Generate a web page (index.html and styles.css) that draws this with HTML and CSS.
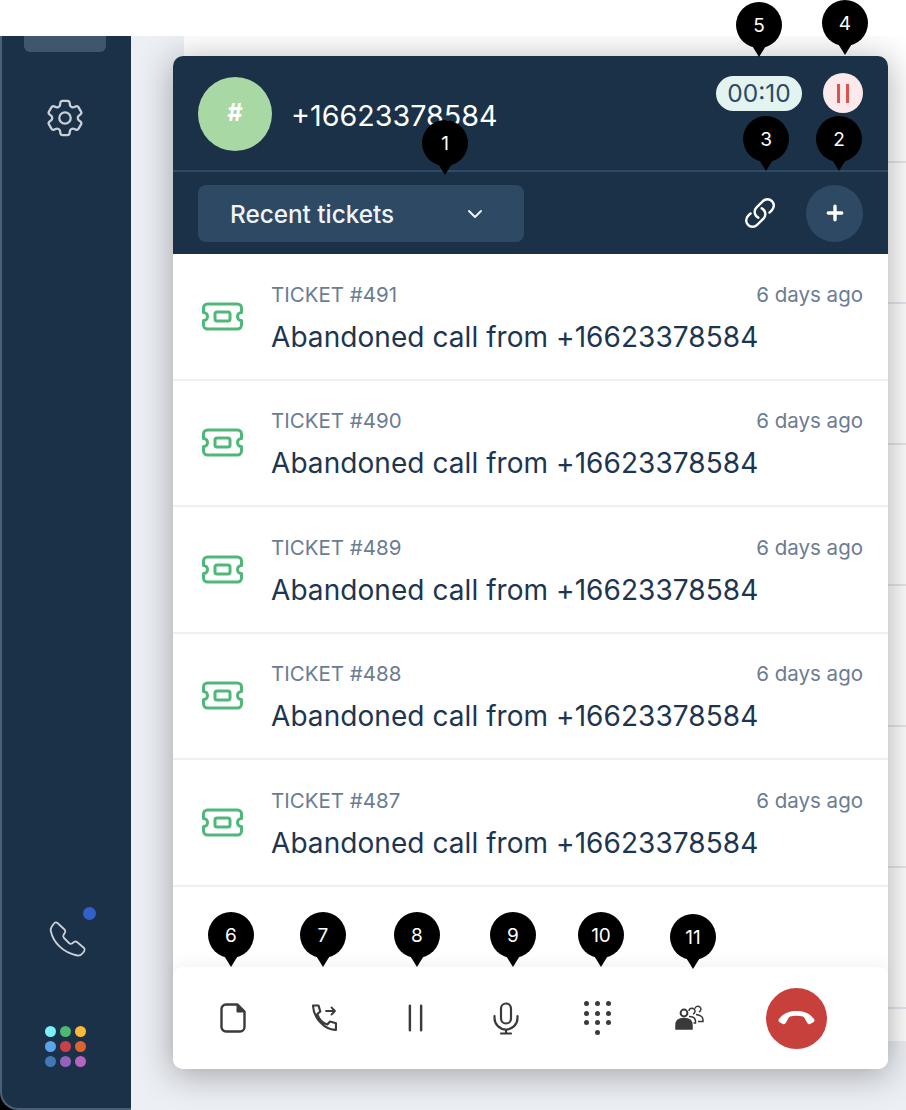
FILE: index.html
```html
<!DOCTYPE html>
<html lang="en">
<head>
  <meta charset="UTF-8" />
  <meta name="viewport" content="width=device-width, initial-scale=1.0"/>
  <title>Softphone</title>
  <link rel="stylesheet" href="styles.css">
</head>
<body>
  <div class="top-strip"></div>

  <div class="app">
    <!-- Left nav -->
    <aside class="sidebar">
      <div class="nav-active"></div>
      <svg class="gear" viewBox="2 2 20 20" fill="none" stroke="currentColor" stroke-width="1.2" stroke-linejoin="round">
        <path d="M9.594 3.94c.09-.542.56-.94 1.11-.94h2.593c.55 0 1.02.398 1.11.94l.213 1.281c.063.374.313.686.645.87.074.04.147.083.22.127.324.196.72.257 1.075.124l1.217-.456a1.125 1.125 0 011.37.49l1.296 2.247a1.125 1.125 0 01-.26 1.431l-1.003.827c-.293.24-.438.613-.431.992a6.759 6.759 0 010 .255c-.007.378.138.75.43.99l1.005.828c.424.35.534.954.26 1.43l-1.298 2.247a1.125 1.125 0 01-1.369.491l-1.217-.456c-.355-.133-.75-.072-1.076.124a6.57 6.57 0 01-.22.128c-.331.183-.581.495-.644.869l-.213 1.28c-.09.543-.56.941-1.11.941h-2.594c-.55 0-1.02-.398-1.11-.94l-.213-1.281c-.062-.374-.312-.686-.644-.87a6.52 6.52 0 01-.22-.127c-.325-.196-.72-.257-1.076-.124l-1.217.456a1.125 1.125 0 01-1.369-.49l-1.297-2.247a1.125 1.125 0 01.26-1.431l1.004-.827c.292-.24.437-.613.43-.992a6.932 6.932 0 010-.255c.007-.378-.138-.75-.43-.99l-1.004-.828a1.125 1.125 0 01-.26-1.43l1.297-2.247a1.125 1.125 0 011.37-.491l1.216.456c.356.133.751.072 1.076-.124.072-.044.146-.087.22-.128.332-.183.582-.495.644-.869l.214-1.281z"/>
        <circle cx="12" cy="12" r="3"/>
      </svg>
      <div class="nav-bottom">
        <div class="nav-phone">
          <svg class="nav-phone-icon" viewBox="0 0 40 40" fill="none" stroke="currentColor" stroke-width="1.8" stroke-linejoin="round">
            <path d="M6 3.500c1-1.500 2.500-1.500 3.500-.5l7 6.500c1 1 1 2 .5 3l-1.500 2.500c-.5 1-.3 2 .5 3l5 5c1 1 2 1 3 .5l2-1.500c1-.7 2-.7 3 0l7 6c1 1 1 2 .3 3l-1 1.500c-1.500 2-3.500 3.500-6 3C15 33 5 22 2.800 11c-.3-1.500 0-3 1-4.500z"/>
          </svg>
          <span class="nav-dot"></span>
        </div>
        <div class="apps">
          <span class="c1"></span><span class="c2"></span><span class="c3"></span>
          <span class="c4"></span><span class="c5"></span><span class="c6"></span>
          <span class="c7"></span><span class="c8"></span><span class="c9"></span>
        </div>
      </div>
    </aside>

    <!-- Page behind the widget -->
    <main class="main">
      <div class="bg-card">
        <div class="bg-row first"></div>
        <div class="bg-row"></div>
        <div class="bg-row"></div>
        <div class="bg-row"></div>
        <div class="bg-row"></div>
        <div class="bg-row"></div>
        <div class="bg-row"></div>
      </div>
    </main>
  </div>

  <!-- Call widget -->
  <section class="widget">
    <header class="widget-head">
      <div class="caller">
        <div class="avatar">#</div>
        <div class="caller-number">+16623378584</div>
        <div class="call-state">
          <span class="timer">00:10</span>
          <span class="pause-badge"><i></i><i></i></span>
        </div>
      </div>
      <div class="toolbar">
        <button class="select">
          <span>Recent tickets</span>
          <svg class="chevron" viewBox="0 0 16 10" fill="none" stroke="currentColor" stroke-width="2" stroke-linecap="round" stroke-linejoin="round"><path d="M2 2l6 6 6-6"/></svg>
        </button>
        <svg class="link-icon" viewBox="0 0 24 24" fill="none" stroke="currentColor" stroke-width="1.7" stroke-linecap="round" stroke-linejoin="round">
          <path d="M13.19 8.688a4.5 4.5 0 011.242 7.244l-4.5 4.5a4.5 4.5 0 01-6.364-6.364l1.757-1.757m13.35-.622l1.757-1.757a4.5 4.5 0 00-6.364-6.364l-4.5 4.5a4.5 4.5 0 001.242 7.244"/>
        </svg>
        <button class="add-btn">
          <svg viewBox="0 0 16 16" fill="none" stroke="currentColor" stroke-width="3" stroke-linecap="round"><path d="M8 2v12M2 8h12"/></svg>
        </button>
      </div>
    </header>

    <div class="tickets">
      <div class="ticket">
        <svg class="ticket-icon" viewBox="0 0 42 29" fill="none" stroke="currentColor" stroke-width="3" stroke-linejoin="round"><path d="M6 2h30a4 4 0 0 1 4 4v4.500a4 4 0 0 0 0 8V23a4 4 0 0 1-4 4H6a4 4 0 0 1-4-4v-4.500a4 4 0 0 0 0-8V6a4 4 0 0 1 4-4z"/><rect x="13.500" y="10" width="15" height="9" rx="2"/></svg>
        <div class="ticket-body">
          <div class="ticket-meta"><span>TICKET #491</span><span class="ago">6 days ago</span></div>
          <div class="ticket-title">Abandoned call from +16623378584</div>
        </div>
      </div>
      <div class="ticket">
        <svg class="ticket-icon" viewBox="0 0 42 29" fill="none" stroke="currentColor" stroke-width="3" stroke-linejoin="round"><path d="M6 2h30a4 4 0 0 1 4 4v4.500a4 4 0 0 0 0 8V23a4 4 0 0 1-4 4H6a4 4 0 0 1-4-4v-4.500a4 4 0 0 0 0-8V6a4 4 0 0 1 4-4z"/><rect x="13.500" y="10" width="15" height="9" rx="2"/></svg>
        <div class="ticket-body">
          <div class="ticket-meta"><span>TICKET #490</span><span class="ago">6 days ago</span></div>
          <div class="ticket-title">Abandoned call from +16623378584</div>
        </div>
      </div>
      <div class="ticket">
        <svg class="ticket-icon" viewBox="0 0 42 29" fill="none" stroke="currentColor" stroke-width="3" stroke-linejoin="round"><path d="M6 2h30a4 4 0 0 1 4 4v4.500a4 4 0 0 0 0 8V23a4 4 0 0 1-4 4H6a4 4 0 0 1-4-4v-4.500a4 4 0 0 0 0-8V6a4 4 0 0 1 4-4z"/><rect x="13.500" y="10" width="15" height="9" rx="2"/></svg>
        <div class="ticket-body">
          <div class="ticket-meta"><span>TICKET #489</span><span class="ago">6 days ago</span></div>
          <div class="ticket-title">Abandoned call from +16623378584</div>
        </div>
      </div>
      <div class="ticket">
        <svg class="ticket-icon" viewBox="0 0 42 29" fill="none" stroke="currentColor" stroke-width="3" stroke-linejoin="round"><path d="M6 2h30a4 4 0 0 1 4 4v4.500a4 4 0 0 0 0 8V23a4 4 0 0 1-4 4H6a4 4 0 0 1-4-4v-4.500a4 4 0 0 0 0-8V6a4 4 0 0 1 4-4z"/><rect x="13.500" y="10" width="15" height="9" rx="2"/></svg>
        <div class="ticket-body">
          <div class="ticket-meta"><span>TICKET #488</span><span class="ago">6 days ago</span></div>
          <div class="ticket-title">Abandoned call from +16623378584</div>
        </div>
      </div>
      <div class="ticket">
        <svg class="ticket-icon" viewBox="0 0 42 29" fill="none" stroke="currentColor" stroke-width="3" stroke-linejoin="round"><path d="M6 2h30a4 4 0 0 1 4 4v4.500a4 4 0 0 0 0 8V23a4 4 0 0 1-4 4H6a4 4 0 0 1-4-4v-4.500a4 4 0 0 0 0-8V6a4 4 0 0 1 4-4z"/><rect x="13.500" y="10" width="15" height="9" rx="2"/></svg>
        <div class="ticket-body">
          <div class="ticket-meta"><span>TICKET #487</span><span class="ago">6 days ago</span></div>
          <div class="ticket-title">Abandoned call from +16623378584</div>
        </div>
      </div>
    </div>

    <footer class="controls">
      <button class="ctrl">
        <svg class="doc" viewBox="0 0 26 30" fill="none" stroke="currentColor" stroke-width="2.400" stroke-linejoin="round"><path d="M6 1.500h11.500l7 7V24a4.500 4.500 0 0 1-4.500 4.500H6A4.500 4.500 0 0 1 1.500 24V6A4.500 4.500 0 0 1 6 1.500z"/><path d="M17 2v7h7" fill="currentColor" stroke-width="1"/></svg>
      </button>
      <button class="ctrl">
        <svg class="transfer" viewBox="0 0 26 28" fill="none" stroke="currentColor" stroke-width="2.200" stroke-linejoin="round" stroke-linecap="round"><path d="M2 1.500h5.500l1.800 6-3 2.500c1.500 5 5 8.800 10 10.500l2.700-3 6 1.800v6.500C14 26.500 2.500 14 2 1.500z"/><path d="M15 7h9M20.500 3.500L24 7l-3.500 3.500" stroke-width="1.800"/></svg>
      </button>
      <button class="ctrl">
        <svg class="hold" viewBox="0 0 16 30" fill="none" stroke="currentColor" stroke-width="2.600" stroke-linecap="round"><path d="M2 2v26M14 2v26"/></svg>
      </button>
      <button class="ctrl">
        <svg class="mic" viewBox="0 0 26 33" fill="none" stroke="currentColor" stroke-width="2.200" stroke-linecap="round" stroke-linejoin="round"><rect x="8" y="1.500" width="10" height="20" rx="5"/><path d="M1.500 14v2a11.500 11.500 0 0 0 23 0v-2M13 27.500v4M8 31.500h10"/></svg>
      </button>
      <button class="ctrl">
        <div class="keypad">
          <span></span><span></span><span></span>
          <span></span><span></span><span></span>
          <span></span><span></span><span></span>
          <span class="last"></span>
        </div>
      </button>
      <button class="ctrl">
        <svg class="team" viewBox="0 0 30 26" fill="none" stroke="currentColor" stroke-width="1.500">
          <circle cx="9" cy="8" r="3.400" stroke-width="2"/>
          <path d="M1 24v-4c0-4 3-6.500 8-6.500s8 2.500 8 6.500v4z" fill="currentColor"/>
          <path d="M14 6a3 3 0 1 1 4 3M14 11.500c4 0 6.500 1.500 6.500 5v1.500h-2"/>
          <path d="M20 3.500a3 3 0 1 1 4 3.500M21 9.500c4 .5 7 2 7 5.500v1.500h-5"/>
        </svg>
      </button>
      <button class="hangup">
        <svg viewBox="0 0 37 14" fill="currentColor"><path d="M1 8C6 1.500 12 0 18.500 0S31 1.500 36 8c1 1.500.5 2.500-1 3.500L32 13c-1 .5-2 .2-2.500-.8L27 8c-.5-1-1-2-2-2.500-4-1-9-1-13 0-1 .5-1.500 1.500-2 2.500l-2.500 4.200c-.5 1-1.500 1.300-2.500.8L2 11.500C.5 10.500 0 9.500 1 8z"/></svg>
      </button>
    </footer>
  </section>

  <!-- Numbered callouts -->
  <span class="pin pin-1">1</span>
  <span class="pin pin-2">2</span>
  <span class="pin pin-3">3</span>
  <span class="pin pin-4">4</span>
  <span class="pin pin-5">5</span>
  <span class="pin pin-6">6</span>
  <span class="pin pin-7">7</span>
  <span class="pin pin-8">8</span>
  <span class="pin pin-9">9</span>
  <span class="pin pin-10">10</span>
  <span class="pin pin-11">11</span>
</body>
</html>
```

FILE: styles.css
```css
* {
  box-sizing: border-box;
}

body {
  margin: 0;
  height: 1110px;
  overflow: hidden;
  position: relative;
  background: #fff;
  font-family: Inter, "Liberation Sans", sans-serif;
}

button {
  font-family: inherit;
  border: none;
  padding: 0;
  background: none;
  cursor: pointer;
}

.top-strip {
  position: relative;
  z-index: 2;
  height: 36px;
  background: #fff;
}

.app {
  display: flex;
  height: 1074px;
  background: #000;
}

/* Sidebar */
.sidebar {
  position: relative;
  z-index: 2;
  width: 131px;
  display: flex;
  flex-direction: column;
  align-items: center;
  padding-right: 3px;
  background: #1b3148;
  border-left: 2px solid #4a6075;
  border-bottom: 2px solid #4a6075;
  border-bottom-left-radius: 18px;
  color: #c9d0d7;
}

.nav-active {
  width: 82px;
  height: 16px;
  background: #3f566c;
  border-radius: 0 0 6px 6px;
}

.gear {
  width: 38px;
  height: 38px;
  margin-top: 47px;
}

.nav-bottom {
  margin-top: auto;
  margin-bottom: 41px;
  display: flex;
  flex-direction: column;
  align-items: center;
  gap: 66px;
}

.nav-phone {
  position: relative;
  width: 40px;
  height: 40px;
  margin-left: 6px;
}

.nav-phone-icon {
  width: 40px;
  height: 40px;
  display: block;
}

.nav-dot {
  position: absolute;
  top: -13px;
  left: 35px;
  width: 13px;
  height: 13px;
  border-radius: 50%;
  background: #3060c8;
}

.apps {
  display: grid;
  grid-template-columns: repeat(3, 11px);
  gap: 4px;
}

.apps span {
  height: 11px;
  border-radius: 50%;
}

.c1 { background: #7bf0f5; }
.c2 { background: #4cb870; }
.c3 { background: #fbb93a; }
.c4 { background: #5aa5ec; }
.c5 { background: #c9404a; }
.c6 { background: #e0622f; }
.c7 { background: #4079b3; }
.c8 { background: #9560c0; }
.c9 { background: #b565c0; }

/* Page behind */
.main {
  flex: 1;
  background: #eceff4;
  padding: 0 0 69px 53px;
}

.bg-card {
  height: 100%;
  background: #fff;
  display: flex;
  flex-direction: column;
}

.bg-row {
  height: 141px;
  border-bottom: 2px solid #e4e8ee;
}

.bg-row.first {
  height: 127px;
}

/* Widget */
.widget {
  position: absolute;
  z-index: 1;
  left: 173px;
  top: 56px;
  width: 715px;
  height: 1013px;
  display: flex;
  flex-direction: column;
  background: #fff;
  border-radius: 10px;
  box-shadow: 0 5px 34px 2px rgba(0, 0, 0, 0.3);
}

.widget-head {
  background: #1b3148;
  border-radius: 10px 10px 0 0;
  color: #fff;
}

.caller {
  height: 116px;
  display: flex;
  padding: 21px 25px 0;
  border-bottom: 2px solid #2d4a66;
}

.avatar {
  width: 74px;
  height: 74px;
  border-radius: 50%;
  background: #a8d8a4;
  display: flex;
  align-items: center;
  justify-content: center;
  font-size: 24px;
  font-weight: 700;
  padding-bottom: 4px;
}

.caller-number {
  margin-left: 19px;
  margin-top: 21px;
  font-size: 28.700px;
  line-height: 36px;
}

.call-state {
  margin-left: auto;
  margin-top: -4px;
  display: flex;
  align-items: center;
  height: 40px;
  gap: 21px;
}

.timer {
  width: 86px;
  height: 35px;
  border-radius: 18px;
  background: #e3f4f0;
  color: #2a4a68;
  font-size: 24.500px;
  line-height: 35px;
  text-align: center;
}

.pause-badge {
  width: 40px;
  height: 40px;
  border-radius: 50%;
  background: #fbe9ec;
  display: flex;
  align-items: center;
  justify-content: center;
  gap: 6px;
}

.pause-badge i {
  width: 3px;
  height: 19px;
  background: #d9534f;
}

.toolbar {
  height: 82px;
  display: flex;
  align-items: center;
  padding: 0 25px;
}

.select {
  width: 326px;
  height: 57px;
  border-radius: 8px;
  background: #2e4963;
  color: #f1f4f7;
  font-size: 24.300px;
  font-weight: 500;
  line-height: 30px;
  display: flex;
  align-items: center;
  justify-content: space-between;
  padding: 1px 41px 0 32px;
}

.chevron {
  width: 16px;
  height: 10px;
}

.link-icon {
  width: 34px;
  height: 34px;
  margin-left: auto;
  margin-right: 29px;
}

.add-btn {
  width: 57px;
  height: 57px;
  border-radius: 50%;
  background: #2e4963;
  color: #fff;
  display: flex;
  align-items: center;
  justify-content: center;
}

.add-btn svg {
  width: 18px;
  height: 18px;
}

/* Ticket list */
.tickets {
  flex: 1;
}

.ticket {
  height: 126.500px;
  display: flex;
  align-items: center;
  padding: 0 25px 0 28px;
  border-bottom: 2px solid #edf1f6;
}

.ticket-icon {
  width: 43px;
  height: 29px;
  color: #4fb878;
  flex: none;
}

.ticket-body {
  flex: 1;
  margin-left: 27px;
  padding-top: 2px;
}

.ticket-meta {
  display: flex;
  justify-content: space-between;
  font-size: 20.500px;
  line-height: 28px;
  color: #6b7c93;
}

.ticket-title {
  margin-top: 11px;
  font-size: 28px;
  letter-spacing: 0.06px;
  line-height: 34px;
  color: #1e3550;
}

/* Call controls */
.controls {
  height: 102px;
  display: flex;
  align-items: center;
  padding-left: 14.500px;
  background: #fff;
  border-radius: 10px;
  box-shadow: 0 -6px 14px rgba(0, 0, 0, 0.04);
  color: #3a3a3a;
}

.ctrl {
  width: 91px;
  display: flex;
  align-items: center;
  justify-content: center;
  color: inherit;
}

.doc { width: 26px; height: 30px; }
.transfer { width: 26px; height: 28px; }
.hold { width: 15px; height: 30px; }
.mic { width: 26px; height: 33px; }
.team { width: 30px; height: 26px; margin-left: 4px; }

.keypad {
  display: grid;
  grid-template-columns: repeat(3, 5px);
  gap: 4.500px 6px;
}

.keypad span {
  height: 5px;
  border-radius: 50%;
  background: currentColor;
}

.keypad .last {
  grid-column: 2;
}

.hangup {
  width: 61px;
  height: 61px;
  margin-left: 32px;
  border-radius: 50%;
  background: #c8403c;
  color: #fff;
  display: flex;
  align-items: center;
  justify-content: center;
}

.hangup svg {
  width: 37px;
  height: 14px;
}

/* Callouts */
.pin {
  position: absolute;
  z-index: 3;
  width: 46px;
  height: 46px;
  border-radius: 50%;
  background: #000;
  color: #fff;
  font-size: 19px;
  font-weight: 400;
  line-height: 48px;
  text-align: center;
}

.pin::after {
  content: "";
  position: absolute;
  left: 50%;
  bottom: -9px;
  margin-left: -8px;
  border-left: 8px solid transparent;
  border-right: 8px solid transparent;
  border-top: 13px solid #000;
}

.pin-1 { left: 422px; top: 120px; }
.pin-2 { left: 816px; top: 116px; }
.pin-3 { left: 743px; top: 116px; }
.pin-4 { left: 822px; top: 0; }
.pin-5 { left: 736px; top: 2px; }
.pin-6 { left: 208px; top: 912px; }
.pin-7 { left: 300px; top: 912px; }
.pin-8 { left: 394px; top: 912px; }
.pin-9 { left: 490px; top: 912px; }
.pin-10 { left: 578px; top: 912px; }
.pin-11 { left: 670px; top: 914px; }
```
